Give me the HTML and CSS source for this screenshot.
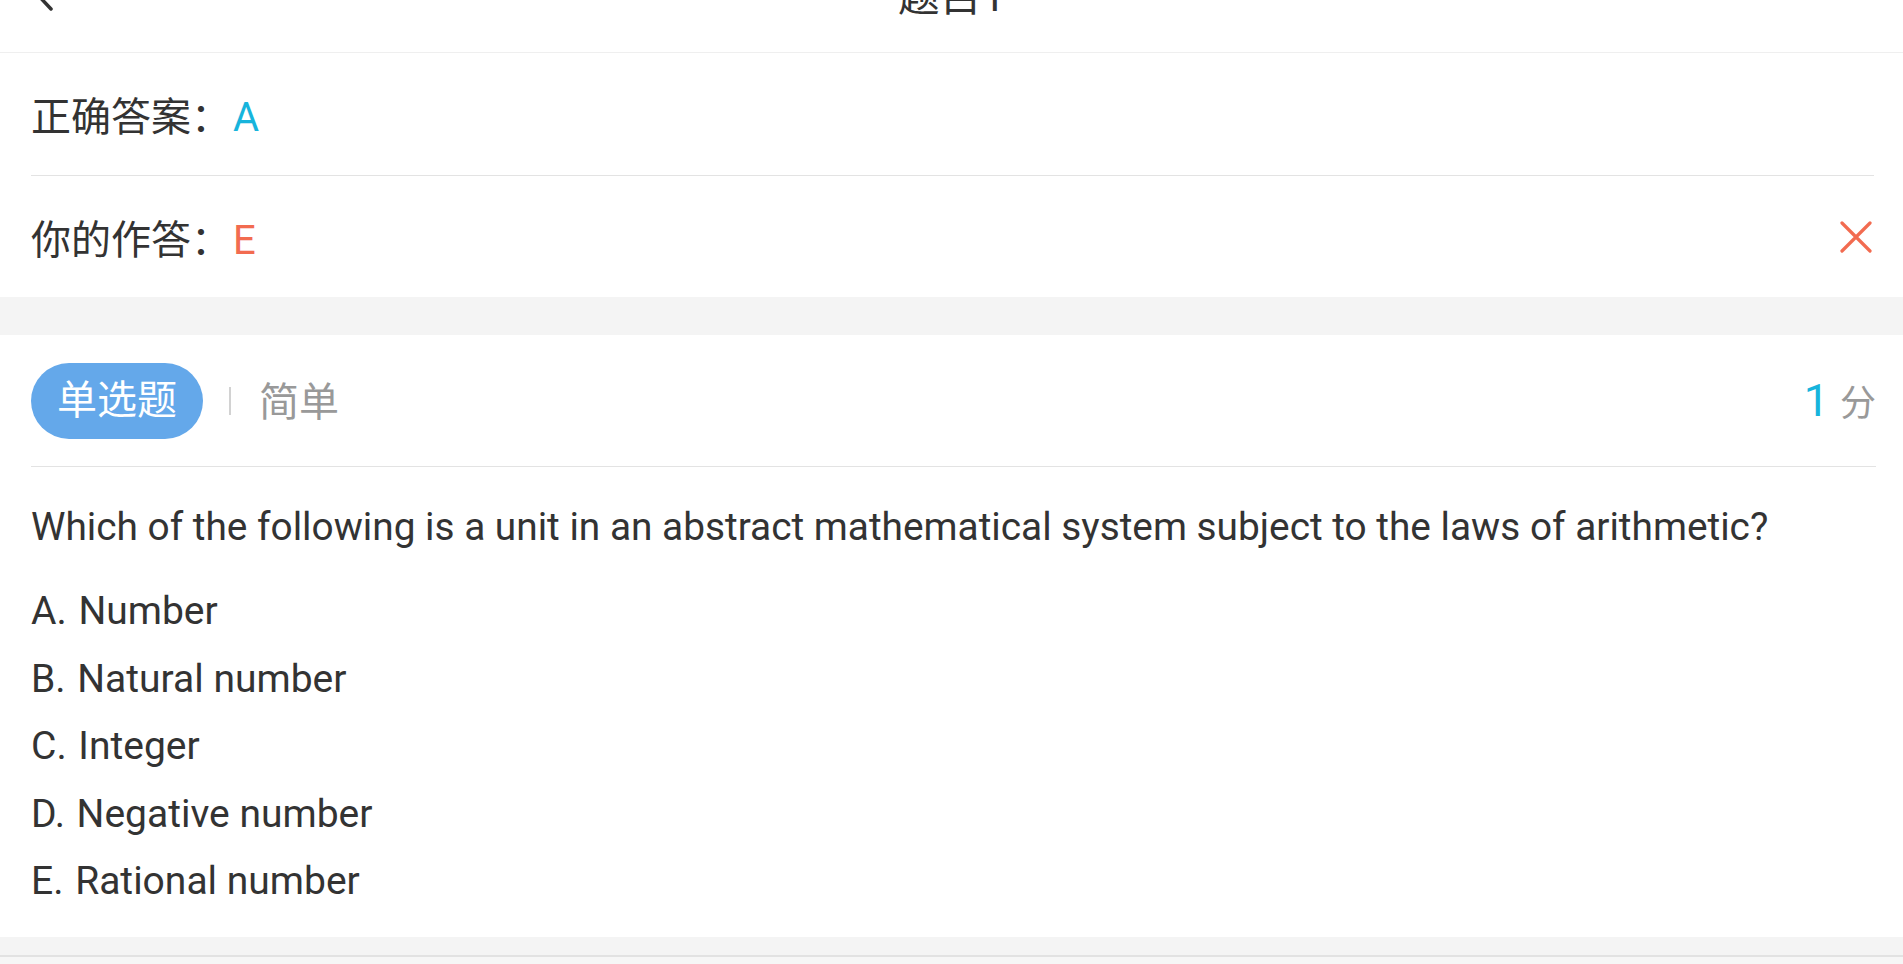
FILE: index.html
```html
<!DOCTYPE html>
<html lang="zh-CN">

<head>
    <meta charset="UTF-8" />
    <meta name="viewport" content="width=device-width, initial-scale=1.0" />
    <title>题目1</title>
    <link rel="stylesheet" href="styles.css">
</head>

<body>

    <div class="topbar">
        <a class="back" href="#">
            <svg width="22" height="38" viewBox="0 0 22 38">
                <path d="M19 3 L4 19 L19 35" fill="none" stroke="#333" stroke-width="3.5" stroke-linecap="round" stroke-linejoin="round" />
            </svg>
        </a>
        <div class="topbar-title">题目1</div>
        <div></div>
    </div>

    <!-- answer summary -->
    <div class="answer-card">
        <div class="answer-row">
            <div>正确答案：<span class="right-answer">A</span></div>
        </div>
        <div class="answer-row">
            <div>你的作答：<span class="wrong-answer">E</span></div>
            <svg class="wrong-icon" width="32" height="32" viewBox="0 0 32 32">
                <path d="M2 2 L30 30 M30 2 L2 30" stroke="#f26b50" stroke-width="3.2" stroke-linecap="round" />
            </svg>
        </div>
    </div>

    <!-- question -->
    <div class="question-card">
        <div class="question-head">
            <div class="question-tags">
                <span class="type-badge">单选题</span>
                <span class="tag-divider"></span>
                <span class="level">简单</span>
            </div>
            <div class="score"><span class="score-num">1</span><span class="score-unit">分</span></div>
        </div>

        <div class="question-body">
            <div class="question-text">Which of the following is a unit in an abstract mathematical system subject to the laws of arithmetic?</div>
            <ul class="options">
                <li><span class="opt-key">A.</span> Number</li>
                <li><span class="opt-key">B.</span> Natural number</li>
                <li><span class="opt-key">C.</span> Integer</li>
                <li><span class="opt-key">D.</span> Negative number</li>
                <li><span class="opt-key">E.</span> Rational number</li>
            </ul>
        </div>
    </div>

    <div class="bottombar"></div>

</body>

</html>
```

FILE: styles.css
```css
body {
    margin: 0;
    background: #f4f4f4;
    font-family: Roboto, "Noto Sans CJK SC", sans-serif;
    color: #333;
    overflow: hidden;
}

.topbar {
    margin-top: -67px;
    height: 119px;
    background: #fff;
    border-bottom: 1px solid #efefef;
    display: grid;
    grid-template-columns: 1fr auto 1fr;
    align-items: center;
    padding: 0 32px;
}

.back {
    display: flex;
    align-items: center;
}

.topbar-title {
    font-size: 42px;
    color: #333;
}

.answer-card {
    background: #fff;
    padding: 0 29px 0 31px;
}

.answer-row {
    height: 122px;
    display: flex;
    align-items: center;
    justify-content: space-between;
    font-size: 40px;
    color: #333;
}

.answer-row + .answer-row {
    height: 121px;
    border-top: 1px solid #e3e3e3;
}

.right-answer {
    color: #17b4dc;
    margin-left: 2px;
}

.wrong-answer {
    color: #f26b50;
    margin-left: 2px;
}

.wrong-icon {
    margin-right: 2px;
}

.question-card {
    margin-top: 38px;
    background: #fff;
    padding: 0 27px 21px 31px;
}

.question-head {
    height: 131px;
    display: flex;
    align-items: center;
    justify-content: space-between;
    border-bottom: 1px solid #e3e3e3;
}

.question-tags {
    display: flex;
    align-items: center;
}

.type-badge {
    background: #64a8ea;
    color: #fff;
    font-size: 40px;
    line-height: 76px;
    height: 76px;
    padding: 0 26px;
    border-radius: 38px;
}

.tag-divider {
    width: 2px;
    height: 28px;
    background: #d2d2d2;
    margin: 0 28px 0 26px;
}

.level {
    font-size: 40px;
    color: #999;
    margin-bottom: 4px;
}

.score {
    display: flex;
    align-items: baseline;
}

.score-num {
    font-size: 45px;
    color: #17b4dc;
}

.score-unit {
    font-size: 36px;
    color: #999;
    margin-left: 11px;
}

.question-body {
    padding-top: 26px;
    font-size: 38.8px;
    line-height: 67px;
}

.options {
    list-style: none;
    margin: 18px 0 0;
    padding: 0;
    font-size: 39px;
    line-height: 67.6px;
}

.opt-key {
    margin-right: 2px;
}

.bottombar {
    margin-top: 18px;
    height: 60px;
    background: #f6f6f6;
    border-top: 2px solid #e2e2e2;
}
```
